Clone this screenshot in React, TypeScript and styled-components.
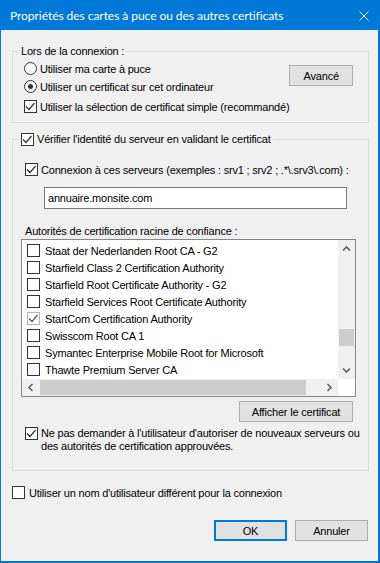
import styled, { createGlobalStyle } from "styled-components";

const GlobalStyle = createGlobalStyle`
  html, body {
    margin: 0;
    padding: 0;
    background: #f0f0f0;
  }
  * {
    box-sizing: border-box;
  }
`;

const Window = styled.div`
  width: 380px;
  height: 563px;
  display: flex;
  flex-direction: column;
  background: #f0f0f0;
  border: 1px solid #0078d7;
  border-right-width: 2px;
  border-bottom-width: 2px;
  font-family: "Liberation Sans", Arial, sans-serif;
  font-size: 11px;
  letter-spacing: -0.2px;
  color: #000;
`;

const TitleBar = styled.div`
  height: 29px;
  flex: none;
  display: flex;
  align-items: center;
  justify-content: space-between;
  padding: 0 9px 0 9px;
  background: #0078d7;
  color: #fff;
`;

const TitleText = styled.span`
  font-family: Lato, "Noto Sans", sans-serif;
  font-size: 12px;
  letter-spacing: -0.05px;
`;

const Body = styled.div`
  flex: 1;
  display: flex;
  flex-direction: column;
  padding: 0 9px 0 11px;
`;

const Group = styled.fieldset<{ $gap: number }>`
  margin: ${(p) => p.$gap}px 0 0;
  padding: 0;
  min-width: 0;
  border: 1px solid #dcdcdc;
`;

const Legend = styled.legend`
  margin-left: 6px;
  padding: 0 2px;
  height: 13px;
  line-height: 13px;
  display: flex;
  align-items: center;
  gap: 3px;
`;

const ConnectRow = styled.div`
  display: flex;
  align-items: flex-start;
  justify-content: space-between;
  padding: 2px 15px 7px 11px;
`;

const Options = styled.div`
  display: flex;
  flex-direction: column;
`;

const Option = styled.label<{ $top?: number; $left?: number; $gap?: number }>`
  display: flex;
  align-items: center;
  gap: ${(p) => p.$gap ?? 3}px;
  height: 17px;
  margin-top: ${(p) => p.$top ?? 0}px;
  margin-left: ${(p) => p.$left ?? 0}px;
  white-space: nowrap;
`;

const WrapOption = styled.label`
  display: flex;
  align-items: flex-start;
  gap: 3px;
  margin: 5px 0 0 4px;
  line-height: 13px;
  white-space: nowrap;
`;

const Box = styled.span<{ $faint?: boolean }>`
  flex: none;
  width: 13px;
  height: 13px;
  display: flex;
  align-items: center;
  justify-content: center;
  background: #fff;
  border: 1px solid ${(p) => (p.$faint ? "#b4b4b4" : "#333")};
`;

const Round = styled.span`
  flex: none;
  width: 13px;
  height: 13px;
  display: flex;
  align-items: center;
  justify-content: center;
  border-radius: 50%;
  background: #fff;
  border: 1px solid #333;
`;

const Dot = styled.span`
  width: 5px;
  height: 5px;
  border-radius: 50%;
  background: #333;
`;

const Button = styled.button<{ $width: number; $primary?: boolean; $top?: number }>`
  width: ${(p) => p.$width}px;
  height: 21px;
  margin-top: ${(p) => p.$top ?? 0}px;
  padding: 0;
  background: #e1e1e1;
  border: ${(p) => (p.$primary ? "2px solid #0078d7" : "1px solid #adadad")};
  font-family: "Liberation Sans", Arial, sans-serif;
  font-size: 11px;
  letter-spacing: -0.2px;
  color: #000;
`;

const ServerContent = styled.div`
  display: flex;
  flex-direction: column;
  padding: 0 12px 17px 8px;
`;

const TextInput = styled.input`
  width: 303px;
  height: 22px;
  margin: 9px 0 0 23px;
  padding: 0 0 0 3px;
  background: #fff;
  border: 1px solid #7a7a7a;
  font-family: "Liberation Sans", Arial, sans-serif;
  font-size: 11px;
  letter-spacing: -0.2px;
  color: #000;
  outline: none;
`;

const FieldLabel = styled.div`
  margin: 16px 0 0 4px;
  height: 13px;
  line-height: 13px;
`;

const ListBox = styled.div`
  margin-top: 1px;
  height: 158px;
  display: grid;
  grid-template-columns: 1fr 17px;
  grid-template-rows: 1fr 17px;
  background: #fff;
  border: 1px solid #828790;
`;

const Items = styled.div`
  padding-top: 2px;
  overflow: hidden;
`;

const Item = styled.div`
  display: flex;
  align-items: center;
  gap: 5px;
  height: 17px;
  padding-left: 5px;
  white-space: nowrap;
`;

const VScroll = styled.div`
  display: flex;
  flex-direction: column;
  background: #f0f0f0;
`;

const HScroll = styled.div`
  display: flex;
  background: #f0f0f0;
`;

const ArrowCell = styled.div`
  flex: none;
  width: 17px;
  height: 17px;
  display: flex;
  align-items: center;
  justify-content: center;
`;

const VTrack = styled.div`
  flex: 1;
  display: flex;
  flex-direction: column;
`;

const HTrack = styled.div`
  flex: 1;
  display: flex;
  align-items: center;
`;

const Thumb = styled.div`
  background: #cdcdcd;
`;

const Corner = styled.div`
  background: #fff;
`;

const ViewButtonRow = styled.div`
  display: flex;
  justify-content: flex-end;
  padding-right: 3px;
`;

const Footer = styled.div`
  display: flex;
  justify-content: flex-end;
  gap: 8px;
  margin-top: 19px;
  padding-right: 1px;
`;

function CheckBox({ checked, faint }: { checked?: boolean; faint?: boolean }) {
  return (
    <Box $faint={faint}>
      {checked && (
        <svg width="11" height="11" viewBox="0 0 11 11">
          <polyline
            points="1,5.5 4,8.5 9.5,2"
            fill="none"
            stroke={faint ? "#5a5a5a" : "#333"}
            strokeWidth="1.2"
          />
        </svg>
      )}
    </Box>
  );
}

function Radio({ checked }: { checked?: boolean }) {
  return <Round>{checked && <Dot />}</Round>;
}

function Chevron({ dir }: { dir: "up" | "down" | "left" | "right" }) {
  const rot = { up: 0, down: 180, left: 270, right: 90 }[dir];
  return (
    <svg width="9" height="9" viewBox="0 0 9 9" style={{ transform: `rotate(${rot}deg)` }}>
      <polyline points="1,6.5 4.5,3 8,6.5" fill="none" stroke="#606060" strokeWidth="1.6" />
    </svg>
  );
}

const authorities = [
  { name: "Staat der Nederlanden Root CA - G2" },
  { name: "Starfield Class 2 Certification Authority" },
  { name: "Starfield Root Certificate Authority - G2" },
  { name: "Starfield Services Root Certificate Authority" },
  { name: "StartCom Certification Authority", checked: true },
  { name: "Swisscom Root CA 1" },
  { name: "Symantec Enterprise Mobile Root for Microsoft" },
  { name: "Thawte Premium Server CA" },
];

export default function App() {
  return (
    <>
      <GlobalStyle />
      <Window>
        <TitleBar>
          <TitleText>Propriétés des cartes à puce ou des autres certificats</TitleText>
          <svg width="10" height="10" viewBox="0 0 10 10">
            <path d="M0.5 0.5 L9.5 9.5 M9.5 0.5 L0.5 9.5" stroke="#fff" strokeWidth="1" />
          </svg>
        </TitleBar>
        <Body>
          <Group $gap={15}>
            <Legend>Lors de la connexion :</Legend>
            <ConnectRow>
              <Options>
                <Option>
                  <Radio />
                  Utiliser ma carte à puce
                </Option>
                <Option $top={1}>
                  <Radio checked />
                  Utiliser un certificat sur cet ordinateur
                </Option>
                <Option $top={3}>
                  <CheckBox checked />
                  Utiliser la sélection de certificat simple (recommandé)
                </Option>
              </Options>
              <Button $width={84} $top={5}>
                Avancé
              </Button>
            </ConnectRow>
          </Group>

          <Group $gap={10}>
            <Legend>
              <CheckBox checked />
              Vérifier l'identité du serveur en validant le certificat
            </Legend>
            <ServerContent>
              <Option $top={15} $left={4}>
                <CheckBox checked />
                Connexion à ces serveurs (exemples : srv1 ; srv2 ; .*\.srv3\.com) :
              </Option>
              <TextInput defaultValue="annuaire.monsite.com" />
              <FieldLabel>Autorités de certification racine de confiance :</FieldLabel>
              <ListBox>
                <Items>
                  {authorities.map((a) => (
                    <Item key={a.name}>
                      <CheckBox checked={a.checked} faint={a.checked} />
                      {a.name}
                    </Item>
                  ))}
                </Items>
                <VScroll>
                  <ArrowCell>
                    <Chevron dir="up" />
                  </ArrowCell>
                  <VTrack>
                    <Thumb style={{ marginTop: 72, height: 17, marginLeft: 1, marginRight: 1 }} />
                  </VTrack>
                  <ArrowCell>
                    <Chevron dir="down" />
                  </ArrowCell>
                </VScroll>
                <HScroll>
                  <ArrowCell>
                    <Chevron dir="left" />
                  </ArrowCell>
                  <HTrack>
                    <Thumb style={{ marginLeft: 1, width: 266, height: 15 }} />
                  </HTrack>
                  <ArrowCell>
                    <Chevron dir="right" />
                  </ArrowCell>
                </HScroll>
                <Corner />
              </ListBox>
              <ViewButtonRow>
                <Button $width={114} $top={4}>
                  Afficher le certificat
                </Button>
              </ViewButtonRow>
              <WrapOption>
                <CheckBox checked />
                <span>
                  Ne pas demander à l'utilisateur d'autoriser de nouveaux serveurs ou
                  <br />
                  des autorités de certification approuvées.
                </span>
              </WrapOption>
            </ServerContent>
          </Group>

          <Option $top={13} $gap={4}>
            <CheckBox />
            Utiliser un nom d'utilisateur différent pour la connexion
          </Option>

          <Footer>
            <Button $width={73} $primary>
              OK
            </Button>
            <Button $width={73}>Annuler</Button>
          </Footer>
        </Body>
      </Window>
    </>
  );
}
